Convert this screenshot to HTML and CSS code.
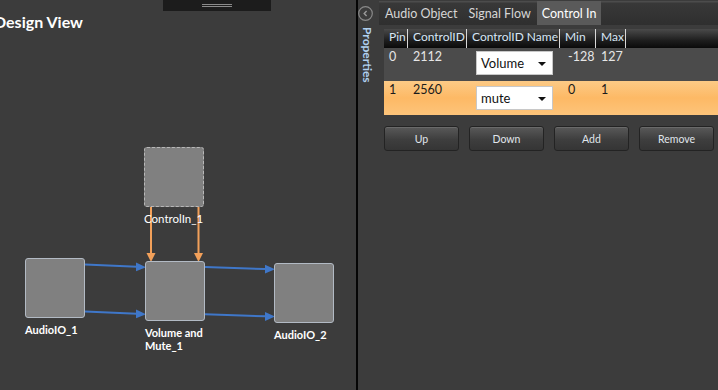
FILE: index.html
```html
<!DOCTYPE html>
<html>
<head>
<meta charset="utf-8">
<link rel="stylesheet" href="styles.css">
</head>
<body>
<div class="app">
  <section class="design">
    <h1 class="design-title">Design View</h1>
    <div class="grip"><span></span><span></span></div>
    <svg class="wires" width="356" height="390" viewBox="0 0 356 390">
      <g stroke="#3f77c9" stroke-width="2" fill="none">
        <line x1="85" y1="264.5" x2="137" y2="266.8"/>
        <line x1="85" y1="311.5" x2="137" y2="313.8"/>
        <line x1="205" y1="267" x2="265" y2="269"/>
        <line x1="205" y1="314.3" x2="265" y2="316.3"/>
      </g>
      <g fill="#3f77c9">
        <polygon points="146,267.2 136,262.6 136,271.2"/>
        <polygon points="146,314.2 136,309.6 136,318.2"/>
        <polygon points="275,269.3 265,264.8 265,273.6"/>
        <polygon points="275,316.6 265,312.1 265,320.9"/>
      </g>
      <g stroke="#f2a05a" stroke-width="2" fill="none">
        <line x1="151" y1="207" x2="151" y2="254"/>
        <line x1="198.5" y1="207" x2="198.5" y2="254"/>
      </g>
      <g fill="#f2a05a">
        <polygon points="151,262 146.5,253 155.5,253"/>
        <polygon points="198.5,262 194,253 203,253"/>
      </g>
    </svg>
    <div class="node node-ctrl">
      <div class="box box-dashed"></div>
      <div class="label label-light">ControlIn_1</div>
    </div>
    <div class="node node-io1">
      <div class="box"></div>
      <div class="label">AudioIO_1</div>
    </div>
    <div class="node node-vol">
      <div class="box"></div>
      <div class="label">Volume and<br>Mute_1</div>
    </div>
    <div class="node node-io2">
      <div class="box"></div>
      <div class="label">AudioIO_2</div>
    </div>
  </section>
  <div class="divider"></div>
  <section class="props">
    <aside class="strip">
      <div class="collapse">
        <svg width="15" height="15" viewBox="0 0 15 15">
          <circle cx="7.5" cy="7.5" r="6.8" fill="none" stroke="#8a8a8a" stroke-width="1.2"/>
          <polyline points="8.6,5 6.2,7.5 8.6,10" fill="none" stroke="#9a9a9a" stroke-width="1.4"/>
        </svg>
      </div>
      <div class="strip-label">Properties</div>
    </aside>
    <div class="content">
      <nav class="tabs">
        <span class="tab">Audio Object</span>
        <span class="tab">Signal Flow</span>
        <span class="tab tab-active">Control In</span>
      </nav>
      <div class="table">
        <div class="row head">
          <div class="cell c-pin">Pin</div>
          <div class="cell c-id">ControlID</div>
          <div class="cell c-name">ControlID Name</div>
          <div class="cell c-min">Min</div>
          <div class="cell c-max">Max</div>
          <div class="cell c-rest"></div>
        </div>
        <div class="row r0">
          <div class="cell">0</div>
          <div class="cell">2112</div>
          <div class="cell c-select"><div class="select">Volume<span class="caret"></span></div></div>
          <div class="cell c-minv">-128</div>
          <div class="cell">127</div>
          <div class="cell"></div>
        </div>
        <div class="row r1">
          <div class="cell">1</div>
          <div class="cell">2560</div>
          <div class="cell c-select"><div class="select select-2">mute<span class="caret"></span></div></div>
          <div class="cell c-minv">0</div>
          <div class="cell">1</div>
          <div class="cell"></div>
        </div>
      </div>
      <div class="buttons">
        <button class="btn">Up</button>
        <button class="btn">Down</button>
        <button class="btn">Add</button>
        <button class="btn">Remove</button>
      </div>
    </div>
  </section>
</div>
</body>
</html>
```

FILE: styles.css
```css
* { box-sizing: border-box; }
html, body { margin: 0; padding: 0; }
body {
  width: 718px;
  height: 390px;
  overflow: hidden;
  background: #3c3c3c;
  font-family: Lato, "Noto Sans", sans-serif;
  color: #e8e8e8;
}
.app {
  display: flex;
  width: 718px;
  height: 390px;
}
.design {
  position: relative;
  width: 356px;
  height: 390px;
  overflow: hidden;
}
.design-title {
  margin: 0 0 0 -6px;
  padding-top: 12px;
  font-size: 16px;
  line-height: 20px;
  font-weight: 700;
  color: #ffffff;
  white-space: nowrap;
}
.grip {
  position: absolute;
  left: 163px;
  top: 0;
  width: 108px;
  height: 11px;
  background: #1c1c1c;
  display: flex;
  flex-direction: column;
  align-items: center;
  padding-top: 4px;
  gap: 1px;
}
.grip span {
  display: block;
  width: 30px;
  height: 1px;
  background: #8a8a8a;
}
.wires {
  position: absolute;
  left: 0;
  top: 0;
}
.node {
  position: absolute;
  display: flex;
  flex-direction: column;
  width: 80px;
}
.box {
  width: 60px;
  height: 60px;
  background: #808080;
  border: 1px solid #b2bac4;
  border-radius: 3px;
}
.box-dashed {
  border: 1px dashed #b8b8b8;
}
.label {
  margin-top: 5px;
  font-size: 11px;
  line-height: 13px;
  font-weight: 700;
  color: #ffffff;
  white-space: nowrap;
}
.label-light {
  font-weight: 400;
  font-size: 11.5px;
  margin-top: 5px;
}
.node-ctrl { left: 144px; top: 147px; }
.node-io1 { left: 25px; top: 258px; }
.node-vol { left: 145px; top: 261px; }
.node-io2 { left: 274px; top: 263px; }

.divider {
  width: 2px;
  height: 390px;
  background: #050505;
}
.props {
  flex: 1;
  display: flex;
  height: 390px;
}
.strip {
  width: 21px;
  display: flex;
  flex-direction: column;
  align-items: flex-start;
  padding-top: 6px;
}
.collapse {
  height: 15px;
  width: 15px;
  line-height: 0;
}
.strip-label {
  margin-top: 6px;
  margin-left: 3px;
  writing-mode: vertical-rl;
  font-size: 12px;
  font-weight: 700;
  line-height: 12px;
  color: #b0d0f0;
}
.content {
  flex: 1;
  display: flex;
  flex-direction: column;
}
.tabs {
  margin-top: 1px;
  height: 24px;
  display: flex;
  align-items: stretch;
  background: linear-gradient(#4c4c4c 0, #4c4c4c 1px, #383838 2px, #2f2f2f 100%);
  font-size: 12.5px;
  padding-left: 1px;
}
.tab {
  padding: 0 5px;
  line-height: 25px;
  color: #d6d6d6;
}
.tab + .tab { margin-left: 1px; }
.tab-active {
  background: #5a5a5a;
  color: #ffffff;
  margin-left: 2px;
}
.table {
  margin: 4px 0 0 5px;
  font-size: 12.5px;
}
.row {
  display: grid;
  grid-template-columns: 24px 59px 93px 36px 30px 1fr;
}
.head {
  height: 19px;
  background: linear-gradient(#4a4a4a, #1e1e1e 60%, #0a0a0a);
  color: #d7e6f5;
  font-size: 12px;
}
.head .cell {
  line-height: 20px;
  padding-left: 4px;
  border-right: 1px solid #d8d8d8;
  white-space: nowrap;
}
.head .c-rest { border-right: none; }
.head .c-min { padding-left: 8px; }
.r0 {
  height: 33px;
  background: #4b4b4b;
  color: #e6e6e6;
}
.r1 {
  height: 34px;
  background: linear-gradient(#fcca86, #fdb965 50%, #fdc47a);
  color: #1a1a1a;
}
.row .cell {
  padding-left: 5px;
  line-height: 16px;
  padding-top: 1px;
}
.row .c-select { padding-left: 9px; padding-top: 3px; }
.r1 .c-select { padding-top: 5px; }
.row .c-minv { padding-left: 8px; }
.head .cell { padding-top: 0; }
.select {
  position: relative;
  width: 77px;
  height: 24px;
  background: #ffffff;
  border: 1px solid #c8c8c8;
  color: #111;
  font-size: 13px;
  line-height: 23px;
  padding-left: 4px;
}
.caret {
  position: absolute;
  right: 6px;
  top: 10px;
  width: 0;
  height: 0;
  border-left: 4px solid transparent;
  border-right: 4px solid transparent;
  border-top: 4px solid #111;
}
.buttons {
  display: flex;
  gap: 10px;
  margin: 11px 0 0 5px;
}
.btn {
  width: 75px;
  height: 25px;
  border: 1px solid #232323;
  border-radius: 3px;
  background: linear-gradient(#595959, #3e3e3e 55%, #353535);
  color: #e0e6ec;
  font-family: Lato, "Noto Sans", sans-serif;
  font-size: 10.5px;
  padding: 0;
  box-shadow: inset 0 1px 0 #6a6a6a;
}
```
